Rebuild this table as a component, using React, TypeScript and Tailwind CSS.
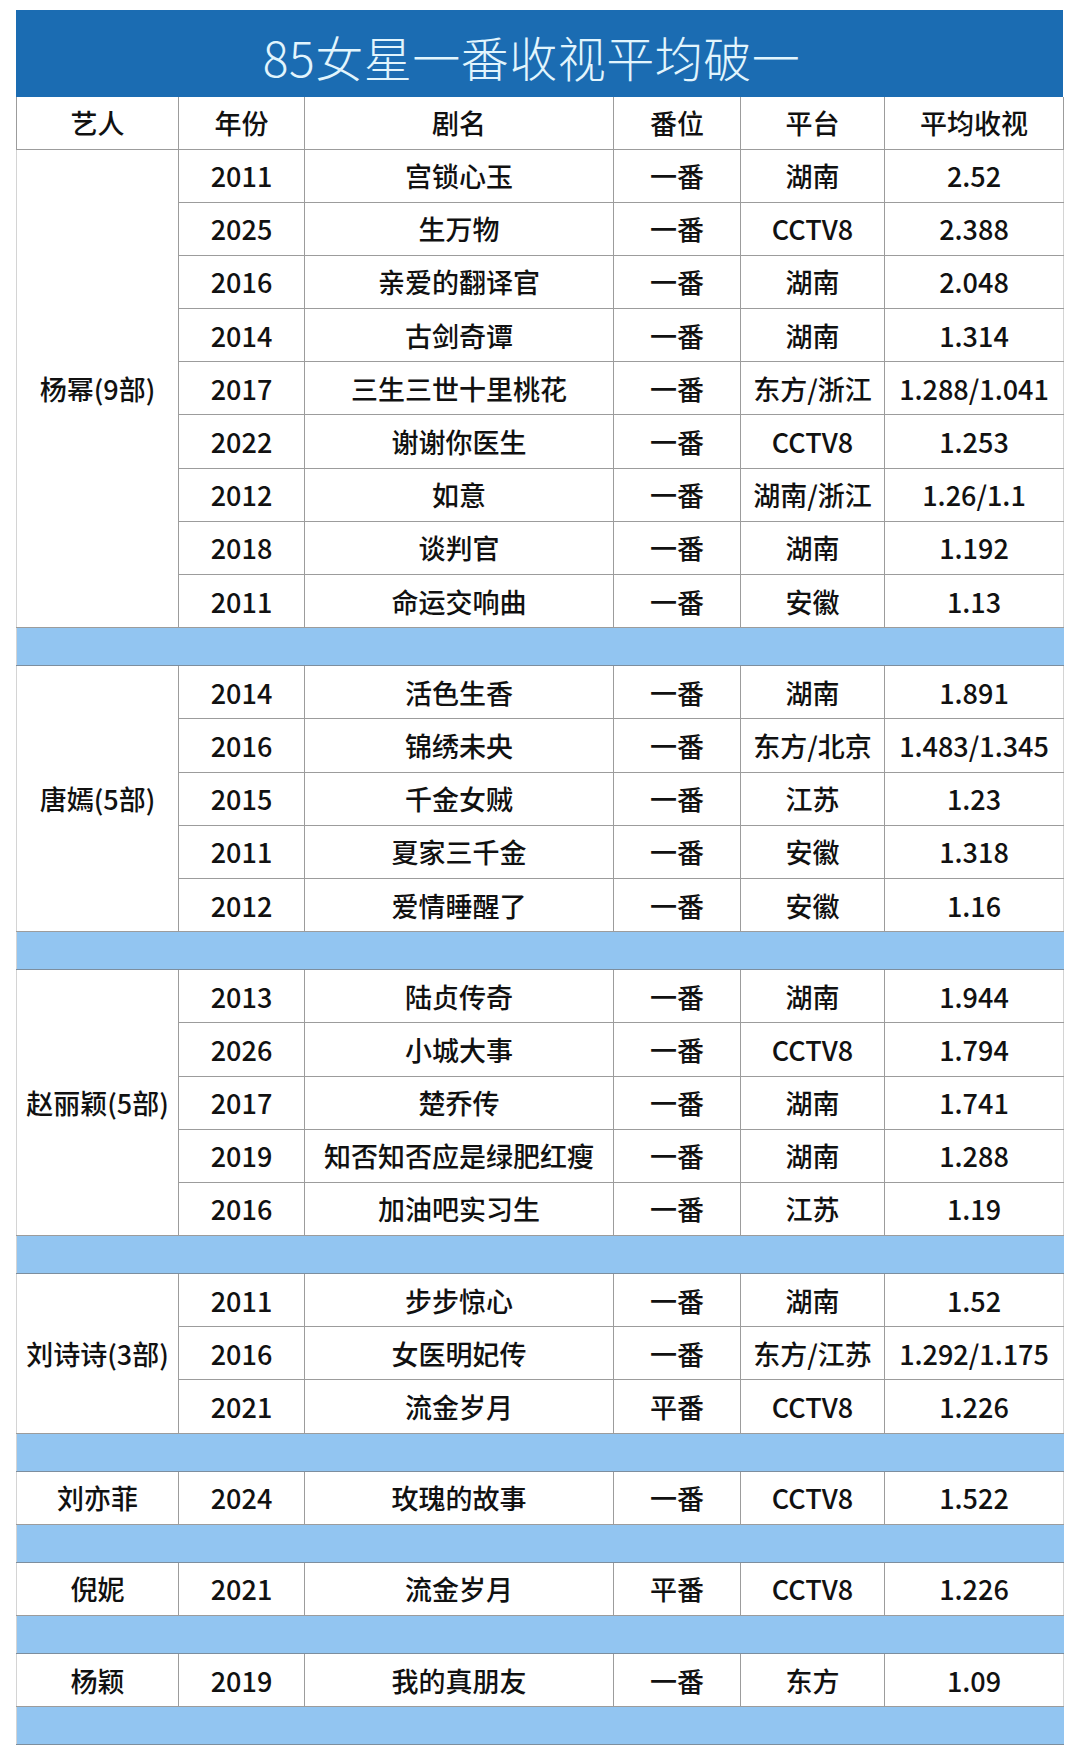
type Show = {
  year: string;
  title: string;
  rank: string;
  platform: string;
  rating: string;
};

type Group = {
  artist: string;
  shows: Show[];
};

const groups: Group[] = [
  {
    artist: "杨幂(9部)",
    shows: [
      { year: "2011", title: "宫锁心玉", rank: "一番", platform: "湖南", rating: "2.52" },
      { year: "2025", title: "生万物", rank: "一番", platform: "CCTV8", rating: "2.388" },
      { year: "2016", title: "亲爱的翻译官", rank: "一番", platform: "湖南", rating: "2.048" },
      { year: "2014", title: "古剑奇谭", rank: "一番", platform: "湖南", rating: "1.314" },
      { year: "2017", title: "三生三世十里桃花", rank: "一番", platform: "东方/浙江", rating: "1.288/1.041" },
      { year: "2022", title: "谢谢你医生", rank: "一番", platform: "CCTV8", rating: "1.253" },
      { year: "2012", title: "如意", rank: "一番", platform: "湖南/浙江", rating: "1.26/1.1" },
      { year: "2018", title: "谈判官", rank: "一番", platform: "湖南", rating: "1.192" },
      { year: "2011", title: "命运交响曲", rank: "一番", platform: "安徽", rating: "1.13" },
    ],
  },
  {
    artist: "唐嫣(5部)",
    shows: [
      { year: "2014", title: "活色生香", rank: "一番", platform: "湖南", rating: "1.891" },
      { year: "2016", title: "锦绣未央", rank: "一番", platform: "东方/北京", rating: "1.483/1.345" },
      { year: "2015", title: "千金女贼", rank: "一番", platform: "江苏", rating: "1.23" },
      { year: "2011", title: "夏家三千金", rank: "一番", platform: "安徽", rating: "1.318" },
      { year: "2012", title: "爱情睡醒了", rank: "一番", platform: "安徽", rating: "1.16" },
    ],
  },
  {
    artist: "赵丽颖(5部)",
    shows: [
      { year: "2013", title: "陆贞传奇", rank: "一番", platform: "湖南", rating: "1.944" },
      { year: "2026", title: "小城大事", rank: "一番", platform: "CCTV8", rating: "1.794" },
      { year: "2017", title: "楚乔传", rank: "一番", platform: "湖南", rating: "1.741" },
      { year: "2019", title: "知否知否应是绿肥红瘦", rank: "一番", platform: "湖南", rating: "1.288" },
      { year: "2016", title: "加油吧实习生", rank: "一番", platform: "江苏", rating: "1.19" },
    ],
  },
  {
    artist: "刘诗诗(3部)",
    shows: [
      { year: "2011", title: "步步惊心", rank: "一番", platform: "湖南", rating: "1.52" },
      { year: "2016", title: "女医明妃传", rank: "一番", platform: "东方/江苏", rating: "1.292/1.175" },
      { year: "2021", title: "流金岁月", rank: "平番", platform: "CCTV8", rating: "1.226" },
    ],
  },
  {
    artist: "刘亦菲",
    shows: [{ year: "2024", title: "玫瑰的故事", rank: "一番", platform: "CCTV8", rating: "1.522" }],
  },
  {
    artist: "倪妮",
    shows: [{ year: "2021", title: "流金岁月", rank: "平番", platform: "CCTV8", rating: "1.226" }],
  },
  {
    artist: "杨颖",
    shows: [{ year: "2019", title: "我的真朋友", rank: "一番", platform: "东方", rating: "1.09" }],
  },
];

const headers = ["艺人", "年份", "剧名", "番位", "平台", "平均收视"];

const cell = "border border-[#9c9c9c] text-center align-middle p-0 whitespace-nowrap";

const App = () => {
  return (
    <div
      className="min-h-[1746px] bg-white pt-[10px] pl-[16px]"
      style={{ fontFamily: '"Noto Sans CJK SC", "Noto Sans", sans-serif' }}
    >
      <div className="w-[1047px]">
        <div className="h-[87px] bg-[#1b6cb2] flex items-center justify-center pr-[16px]">
          <span className="text-[48px] leading-none tracking-[0.5px] text-[#e2f5fd] font-light pt-[4px]">
            85女星一番收视平均破一
          </span>
        </div>

        <table className="w-[1047px] table-fixed border-collapse text-[27px] leading-none font-medium text-[#111]">
          <colgroup>
            <col className="w-[162px]" />
            <col className="w-[126px]" />
            <col className="w-[309px]" />
            <col className="w-[127px]" />
            <col className="w-[144px]" />
            <col className="w-[179px]" />
          </colgroup>
          <thead>
            <tr className="h-[52px]">
              {headers.map((h) => (
                <th key={h} className={`${cell} border-t-0 font-medium`}>
                  {h}
                </th>
              ))}
            </tr>
          </thead>
          <tbody>
            {groups.map((g) => (
              <>
                {g.shows.map((s, i) => (
                  <tr key={g.artist + i} className="h-[53.2px]">
                    {i === 0 && (
                      <td rowSpan={g.shows.length} className={`${cell} border-l-[#d4d4d4]`}>
                        {g.artist}
                      </td>
                    )}
                    <td className={cell}>{s.year}</td>
                    <td className={cell}>{s.title}</td>
                    <td className={cell}>{s.rank}</td>
                    <td className={cell}>{s.platform}</td>
                    <td className={`${cell} border-r-[#d4d4d4]`}>{s.rating}</td>
                  </tr>
                ))}
                <tr key={g.artist + "-band"} className="h-[38px]">
                  <td
                    colSpan={6}
                    className="bg-[#92c5f1] border-t border-b border-[#7d8e9e] border-l border-l-[#d4d4d4] p-0"
                  />
                </tr>
              </>
            ))}
          </tbody>
        </table>
      </div>
    </div>
  );
};

export default App;
